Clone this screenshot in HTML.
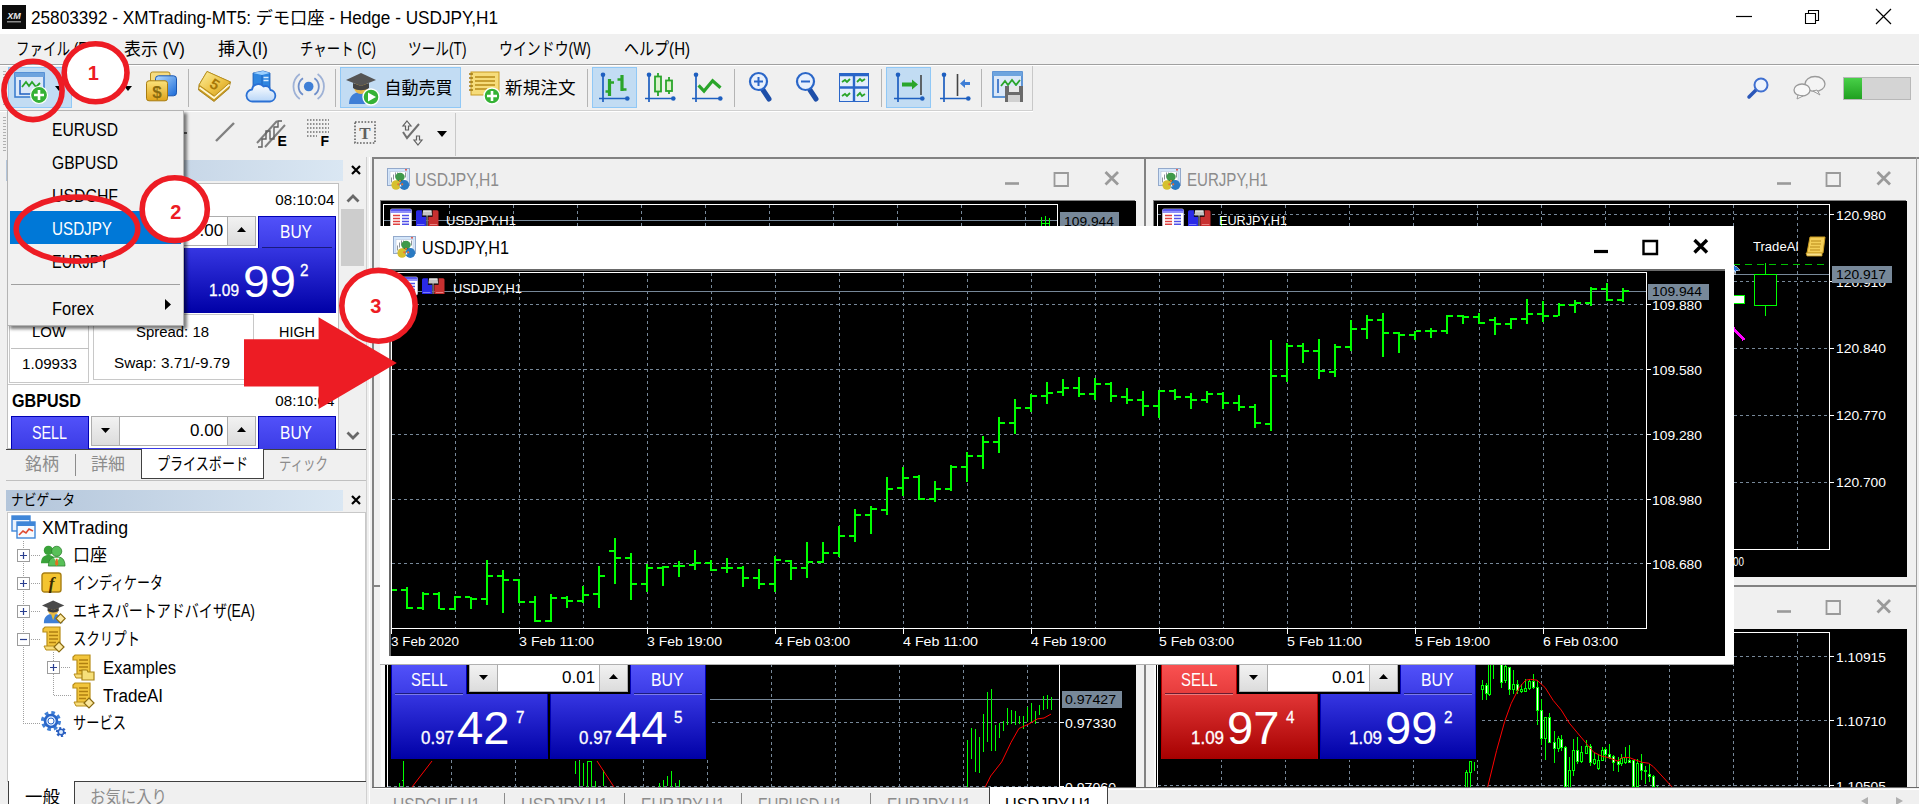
<!DOCTYPE html><html lang="ja"><head><meta charset="utf-8"><title>XMTrading MT5</title><style>
html,body{margin:0;padding:0;background:#f0f0f0;}body{width:1919px;height:804px;overflow:hidden;position:relative;font-family:"Liberation Sans","Noto Sans CJK JP",sans-serif;}.a{position:absolute;display:block;}.t{position:absolute;white-space:nowrap;display:inline-block;}svg{overflow:visible}svg text{font-family:'Liberation Sans','Noto Sans CJK JP',sans-serif;}
</style></head><body>
<div class="a" style="left:0px;top:0px;width:1919px;height:34px;background:#fff;"></div>
<svg class="a" style="left:2px;top:5px;" width="24" height="24" viewBox="0 0 24 24"><rect width="24" height="24" fill="#0c0c0c"/><text x="12" y="14" font-size="9" font-weight="700" font-style="italic" fill="#e8e8e8" text-anchor="middle">XM</text><rect x="5" y="16" width="14" height="1.5" fill="#8a8a8a"/></svg>
<span id="t0" class="t" style="left:31px;top:6.9px;font-size:17.5px;line-height:22.8px;color:#000;font-weight:400;transform-origin:0 50%;transform:scaleX(0.9819);">25803392 - XMTrading-MT5: デモ口座 - Hedge - USDJPY,H1</span>
<svg class="a" style="left:1735px;top:8px;" width="160" height="18" viewBox="0 0 160 18"><path d="M1 8.5H17" stroke="#000" stroke-width="1.2" fill="none"/><path d="M70.5 5.5h10v10h-10z M73.5 5.5v-3h10v10h-3" stroke="#000" stroke-width="1.1" fill="none"/><path d="M141 1l15 15M156 1l-15 15" stroke="#000" stroke-width="1.2" fill="none"/></svg>
<div class="a" style="left:0px;top:34px;width:1919px;height:30px;background:#f0f0f0;"></div>
<span id="t1" class="t" style="left:16px;top:37.6px;font-size:17.5px;line-height:22.8px;color:#000;font-weight:400;transform-origin:0 50%;transform:scaleX(0.7715);">ファイル (F)</span>
<span id="t2" class="t" style="left:123.5px;top:37.6px;font-size:17.5px;line-height:22.8px;color:#000;font-weight:400;transform-origin:0 50%;transform:scaleX(0.9651);">表示 (V)</span>
<span id="t3" class="t" style="left:218px;top:37.6px;font-size:17.5px;line-height:22.8px;color:#000;font-weight:400;transform-origin:0 50%;transform:scaleX(0.9703);">挿入(I)</span>
<span id="t4" class="t" style="left:300px;top:37.6px;font-size:17.5px;line-height:22.8px;color:#000;font-weight:400;transform-origin:0 50%;transform:scaleX(0.7678);">チャート (C)</span>
<span id="t5" class="t" style="left:408px;top:37.6px;font-size:17.5px;line-height:22.8px;color:#000;font-weight:400;transform-origin:0 50%;transform:scaleX(0.7815);">ツール(T)</span>
<span id="t6" class="t" style="left:499px;top:37.6px;font-size:17.5px;line-height:22.8px;color:#000;font-weight:400;transform-origin:0 50%;transform:scaleX(0.7952);">ウインドウ(W)</span>
<span id="t7" class="t" style="left:623.5px;top:37.6px;font-size:17.5px;line-height:22.8px;color:#000;font-weight:400;transform-origin:0 50%;transform:scaleX(0.8594);">ヘルプ(H)</span>
<div class="a" style="left:0px;top:64px;width:1919px;height:1px;background:#a0a0a0;"></div>
<div class="a" style="left:0px;top:65px;width:1919px;height:1px;background:#fff;"></div>
<div class="a" style="left:0px;top:66px;width:1919px;height:45px;background:#f0f0f0;"></div><div class="a" style="left:0px;top:110px;width:1033px;height:1px;background:#d0d0d0;"></div><div class="a" style="left:0px;top:111px;width:1033px;height:1px;background:#fff;"></div><div class="a" style="left:3px;top:69px;width:3px;height:38px;background:repeating-linear-gradient(#f0f0f0 0 2px,#b0b0b0 2px 3px);"></div><div class="a" style="left:8px;top:67px;width:64px;height:41px;background:#c2dcf3;box-sizing:border-box;border:1px solid #90c8f6;"></div><svg class="a" style="left:14px;top:72px;" width="34" height="32" viewBox="0 0 34 32"><rect x="1" y="1" width="29" height="24" fill="#dbe8f8" stroke="#3d7fcf" stroke-width="1.6"/><rect x="1" y="1" width="29" height="4" fill="#6ea4de"/><path d="M6 8v14h20" stroke="#1e5fc0" stroke-width="1.5" fill="none"/><path d="M8 15l4-5 3 4 3-4 4 5 4-4" stroke="#2aa52a" stroke-width="1.8" fill="none"/><circle cx="25" cy="23" r="8.5" fill="#35b235" stroke="#fff" stroke-width="1.2"/><path d="M25 18v10M20 23h10" stroke="#fff" stroke-width="2.6"/></svg><svg class="a" style="left:55px;top:86px;" width="8" height="5" viewBox="0 0 8 5"><path d="M0 0h8l-4 5z" fill="#000"/></svg><svg class="a" style="left:124px;top:86px;" width="8" height="5" viewBox="0 0 8 5"><path d="M0 0h8l-4 5z" fill="#000"/></svg><svg class="a" style="left:146px;top:71px;" width="32" height="32" viewBox="0 0 32 32"><defs><linearGradient id="gb" x1="0" y1="0" x2="1" y2="1"><stop offset="0" stop-color="#b4dcff"/><stop offset="1" stop-color="#1a6ad8"/></linearGradient><linearGradient id="gg" x1="0" y1="0" x2="0" y2="1"><stop offset="0" stop-color="#fbe27a"/><stop offset="1" stop-color="#e0a41c"/></linearGradient></defs><rect x="4.500" y="1" width="19.500" height="10" rx="2" fill="#f6dc80" stroke="#b08a1c"/><rect x="9.500" y="4.800" width="21" height="20" rx="3" fill="url(#gb)" stroke="#1a56b0"/><rect x=".5" y="9.800" width="21" height="20" rx="2.500" fill="url(#gg)" stroke="#a87c10"/><text x="11" y="26.500" font-size="17" font-weight="700" fill="#8a6c10" text-anchor="middle">$</text></svg><div class="a" style="left:188px;top:69px;width:1px;height:38px;background:#b4b4b4;"></div><svg class="a" style="left:197px;top:70px;" width="35" height="34" viewBox="0 0 35 34"><defs><linearGradient id="gk" x1="0" y1="0" x2="1" y2="1"><stop offset="0" stop-color="#fdf0a0"/><stop offset=".6" stop-color="#ecc040"/><stop offset="1" stop-color="#c8961c"/></linearGradient></defs><path d="M10 1.500L33.500 12l-1.500 6.500L17 31.500 1.500 20 2 15z" fill="#c89a20" stroke="#a07810" stroke-width=".8"/><path d="M2.500 17.500L17 28l15.500-13.500" stroke="#fff6d0" stroke-width="2" fill="none"/><path d="M10 1.500L33.500 12 17.500 26 2 15z" fill="url(#gk)" stroke="#b48a18" stroke-width=".8"/><text x="18" y="19.500" font-size="15" font-weight="700" fill="#a87808" text-anchor="middle" transform="rotate(32 18 14)">5</text></svg><svg class="a" style="left:246px;top:70px;" width="33" height="34" viewBox="0 0 33 34"><defs><linearGradient id="gc" x1="0" y1="0" x2="0" y2="1"><stop offset="0" stop-color="#ffffff"/><stop offset="1" stop-color="#b8d6f8"/></linearGradient></defs><path d="M7 3l10-2 7 2v15H7z" fill="#2f86e0" stroke="#1a5cb8" stroke-width=".8"/><path d="M7 3l10-2 7 2-8 2z" fill="#9cd0ff"/><path d="M16 5v13" stroke="#1a5cb8" stroke-width=".8"/><path d="M17.500 7.500h5M17.500 10.500h5" stroke="#d8ecff" stroke-width="1.400"/><path d="M7 31.500a6 6 0 0 1-1-12 6.500 6.500 0 0 1 11.500-3 5 5 0 0 1 7 3.500 5.800 5.800 0 0 1-.5 11.500z" fill="url(#gc)" stroke="#2a70d4" stroke-width="1.800"/></svg><svg class="a" style="left:291px;top:71px;" width="34" height="34" viewBox="0 0 34 34"><circle cx="17.700" cy="15.500" r="4.800" fill="#3f7fd6"/><path d="M12 7.200a10 10 0 0 0 0 16.600M23.400 7.200a10 10 0 0 1 0 16.600" stroke="#6f8fca" stroke-width="1.800" fill="none"/><path d="M8.800 3a15.500 15.500 0 0 0 0 25M26.600 3a15.500 15.500 0 0 1 0 25" stroke="#9fb2d6" stroke-width="1.800" fill="none"/></svg><div class="a" style="left:335px;top:69px;width:1px;height:38px;background:#b4b4b4;"></div><div class="a" style="left:340px;top:67px;width:121px;height:41px;background:#c2dcf3;box-sizing:border-box;border:1px solid #90c8f6;"></div><svg class="a" style="left:345px;top:70px;" width="36" height="36" viewBox="0 0 36 36"><path d="M4 34c0-8 5-12 12-12s12 4 12 12z" fill="#3f7fd6"/><circle cx="16" cy="17" r="7" fill="#e8b84a"/><path d="M1 10l15-7 15 7-15 6z" fill="#555"/><path d="M8 13v5c4 3 12 3 16 0v-5l-8 3z" fill="#444"/><circle cx="26" cy="27" r="8" fill="#35b235" stroke="#fff" stroke-width="1.4"/><path d="M23 22.500l8 4.500-8 4.500z" fill="#fff"/></svg><span id="t8" class="t" style="left:384.5px;top:77.95px;font-size:17px;line-height:22.1px;color:#000;font-weight:400;transform-origin:0 50%;">自動売買</span><svg class="a" style="left:468px;top:70px;" width="36" height="36" viewBox="0 0 36 36"><rect x="3" y="2" width="28" height="23" fill="#f6dc7a" stroke="#c89a20"/><path d="M7 7h20M7 11h20M7 15h20M7 19h12" stroke="#b88a18" stroke-width="1.6"/><path d="M1 4h4M1 8h4M1 12h4M1 16h4M1 20h4" stroke="#a07810" stroke-width="1.4"/><circle cx="24" cy="26" r="8" fill="#35b235" stroke="#fff" stroke-width="1.4"/><path d="M24 21v10M19 26h10" stroke="#fff" stroke-width="2.6"/></svg><span id="t9" class="t" style="left:504.5px;top:77.95px;font-size:17px;line-height:22.1px;color:#000;font-weight:400;transform-origin:0 50%;transform:scaleX(1.0368);">新規注文</span><div class="a" style="left:587px;top:69px;width:1px;height:38px;background:#b4b4b4;"></div><div class="a" style="left:592px;top:67px;width:45px;height:41px;background:#c2dcf3;box-sizing:border-box;border:1px solid #90c8f6;"></div><svg class="a" style="left:598px;top:72px;" width="32" height="30" viewBox="0 0 32 30"><path d="M5 2V30M1 26.500H30" stroke="#1e5fc0" stroke-width="1.700" fill="none"/><circle cx="5" cy="2.800" r="2.300" fill="#1e5fc0"/><circle cx="29.300" cy="26.500" r="2.300" fill="#1e5fc0"/><path d="M11.500 7v17M24 3v16" stroke="#2aa52a" stroke-width="3.200" fill="none"/><path d="M7.500 19.500h4M11.500 10.500h4.500M19.500 7.500h4.500M24 17.500h4.500" stroke="#2aa52a" stroke-width="2.600" fill="none"/></svg><svg class="a" style="left:644px;top:72px;" width="32" height="30" viewBox="0 0 32 30"><path d="M5 2V30M1 26.500H30" stroke="#1e5fc0" stroke-width="1.700" fill="none"/><circle cx="5" cy="2.800" r="2.300" fill="#1e5fc0"/><circle cx="29.300" cy="26.500" r="2.300" fill="#1e5fc0"/><path d="M14 1v23M25 5v17" stroke="#2aa52a" stroke-width="1.800" fill="none"/><rect x="11" y="4.500" width="6" height="15" fill="#dcf2cc" stroke="#2aa52a" stroke-width="1.800"/><rect x="22" y="8.500" width="6" height="10.500" fill="#dcf2cc" stroke="#2aa52a" stroke-width="1.800"/></svg><svg class="a" style="left:691px;top:72px;" width="32" height="30" viewBox="0 0 32 30"><path d="M5 2V30M1 26.500H30" stroke="#1e5fc0" stroke-width="1.700" fill="none"/><circle cx="5" cy="2.800" r="2.300" fill="#1e5fc0"/><circle cx="29.300" cy="26.500" r="2.300" fill="#1e5fc0"/><path d="M7.600 13.400L13 19L21.600 8.800L29.500 15.800" stroke="#2aa52a" stroke-width="3.200" fill="none"/></svg><div class="a" style="left:734px;top:69px;width:1px;height:38px;background:#b4b4b4;"></div><svg class="a" style="left:747px;top:72px;" width="28" height="32" viewBox="0 0 28 32"><path d="M16 18l6 9" stroke="#1e4fa8" stroke-width="5" stroke-linecap="round"/><circle cx="11.500" cy="9.500" r="8.500" fill="#e8f0fc" stroke="#2a66c8" stroke-width="2.200"/><path d="M7 9.500h9M11.500 5v9" stroke="#2a66c8" stroke-width="2"/></svg><svg class="a" style="left:794px;top:72px;" width="28" height="32" viewBox="0 0 28 32"><path d="M16 18l6 9" stroke="#1e4fa8" stroke-width="5" stroke-linecap="round"/><circle cx="11.500" cy="9.500" r="8.500" fill="#e8f0fc" stroke="#2a66c8" stroke-width="2.200"/><path d="M7 9.500h9" stroke="#2a66c8" stroke-width="2"/></svg><svg class="a" style="left:839px;top:73px;" width="31" height="29" viewBox="0 0 31 29"><rect x=".5" y=".5" width="29" height="28" fill="#e4eefb" stroke="#2a66c8"/><path d="M0 2h30M15 0v29M0 14.500h30" stroke="#2a66c8" stroke-width="2.400"/><path d="M3 9l3-2 2 2 3-3M18 9l3-3 2 2 3-2M3 23l3-2 2 2 3-3M18 23l3-3 2 3 3-2" stroke="#2aa52a" stroke-width="1.800" fill="none"/></svg><div class="a" style="left:881px;top:69px;width:1px;height:38px;background:#b4b4b4;"></div><div class="a" style="left:886px;top:67px;width:45px;height:41px;background:#c2dcf3;box-sizing:border-box;border:1px solid #90c8f6;"></div><svg class="a" style="left:893px;top:72px;" width="32" height="30" viewBox="0 0 32 30"><path d="M5 2V30M1 26.500H30" stroke="#1e5fc0" stroke-width="1.700" fill="none"/><circle cx="5" cy="2.800" r="2.300" fill="#1e5fc0"/><circle cx="29.300" cy="26.500" r="2.300" fill="#1e5fc0"/><path d="M28 3v20" stroke="#444" stroke-width="1.600"/><path d="M9 10.500h10v-3l6 5-6 5v-3h-10z" fill="#2aa52a"/></svg><svg class="a" style="left:939px;top:72px;" width="32" height="30" viewBox="0 0 32 30"><path d="M5 2V30M1 26.500H30" stroke="#1e5fc0" stroke-width="1.700" fill="none"/><circle cx="5" cy="2.800" r="2.300" fill="#1e5fc0"/><circle cx="29.300" cy="26.500" r="2.300" fill="#1e5fc0"/><path d="M18.500 2v22" stroke="#444" stroke-width="1.600"/><path d="M31 10h-5v-3l-5 4.500 5 4.500v-3h5z" fill="#3f7fd6"/></svg><div class="a" style="left:981px;top:69px;width:1px;height:38px;background:#b4b4b4;"></div><svg class="a" style="left:992px;top:71px;" width="34" height="33" viewBox="0 0 34 33"><rect x="1" y="1" width="29" height="25" fill="#dbe8f8" stroke="#3d7fcf" stroke-width="1.600"/><rect x="1" y="1" width="29" height="4" fill="#6ea4de"/><path d="M6 8v14" stroke="#1e5fc0" stroke-width="1.500" fill="none"/><path d="M9 15l4-5 3 4 4-5 4 5 4-5" stroke="#2aa52a" stroke-width="1.800" fill="none"/><path d="M13 15h18v16H13z" fill="#6a6a6a"/><rect x="17" y="15" width="10" height="6" fill="#e8e8e8"/><rect x="16" y="24" width="12" height="7" fill="#d0d0d0"/></svg><div class="a" style="left:1032px;top:66px;width:1px;height:44px;background:#c8c8c8;"></div><svg class="a" style="left:1746px;top:76px;" width="24" height="24" viewBox="0 0 24 24"><path d="M3 21l8-8" stroke="#2a56b8" stroke-width="3.500" stroke-linecap="round"/><circle cx="15" cy="9" r="6.500" fill="#eef4fd" stroke="#3f6fd0" stroke-width="2"/></svg><svg class="a" style="left:1792px;top:75px;" width="36" height="26" viewBox="0 0 36 26"><ellipse cx="23" cy="9" rx="10" ry="7.500" fill="#f4f4f4" stroke="#9a9a9a" stroke-width="1.300"/><path d="M25 15l3 5-7-4z" fill="#f4f4f4" stroke="#9a9a9a" stroke-width="1"/><ellipse cx="10" cy="15" rx="8" ry="6" fill="#f8f8f8" stroke="#9a9a9a" stroke-width="1.300"/><path d="M6 20l-1 4 6-3z" fill="#f8f8f8" stroke="#9a9a9a" stroke-width="1"/></svg><div class="a" style="left:1843px;top:77px;width:68px;height:23px;background:#d4d4d4;box-sizing:border-box;border:1px solid #b8b8b8;"></div><div class="a" style="left:1844px;top:78px;width:18px;height:21px;background:linear-gradient(#48d048,#20a020);"></div>
<div class="a" style="left:0px;top:112px;width:1919px;height:45px;background:#f0f0f0;"></div><div class="a" style="left:3px;top:115px;width:3px;height:38px;background:repeating-linear-gradient(#f0f0f0 0 2px,#b0b0b0 2px 3px);"></div><div class="a" style="left:183px;top:132px;width:4px;height:2px;background:#606060;"></div><svg class="a" style="left:214px;top:121px;" width="22" height="22" viewBox="0 0 22 22"><path d="M2 20L20 2" stroke="#808080" stroke-width="2.400"/></svg><svg class="a" style="left:255px;top:117px;" width="34" height="32" viewBox="0 0 34 32"><path d="M2 26L22 4M10 30L30 8" stroke="#808080" stroke-width="2"/><path d="M3 30h4v-8h4v-8h4v8h4v-12h4v-6h4" stroke="#606060" stroke-width="1.400" fill="none"/><text x="22.500" y="29" font-size="14" font-weight="700" fill="#000">E</text></svg><svg class="a" style="left:306px;top:118px;" width="28" height="30" viewBox="0 0 28 30"><path d="M1 2h22M1 6h22M1 10h22M1 14h22M1 18h10" stroke="#707070" stroke-width="1.400" stroke-dasharray="1.5 1.5"/><text x="14.500" y="28" font-size="14" font-weight="700" fill="#000">F</text></svg><svg class="a" style="left:354px;top:121px;" width="24" height="24" viewBox="0 0 24 24"><rect x="1" y="1" width="20" height="21" fill="none" stroke="#606060" stroke-width="1.600" stroke-dasharray="1.6 1.6"/><text x="11" y="18" font-size="17" font-weight="700" fill="#606060" text-anchor="middle" style="font-family:'Liberation Serif',serif">T</text></svg><svg class="a" style="left:401px;top:120px;" width="24" height="26" viewBox="0 0 24 26"><path d="M6 1l4 5h-2.500v4h-3v-4H2z" fill="none" stroke="#606060" stroke-width="1.200"/><path d="M2 12l4 6L18 4" stroke="#707070" stroke-width="2" fill="none"/><path d="M17 25l4-5h-2.500v-4h-3v4H13z" fill="none" stroke="#606060" stroke-width="1.200"/></svg><svg class="a" style="left:437px;top:131px;" width="10" height="6" viewBox="0 0 10 6"><path d="M0 0h10l-5 6z" fill="#000"/></svg><div class="a" style="left:455px;top:113px;width:1px;height:43px;background:#c8c8c8;"></div>
<div class="a" style="left:0px;top:157px;width:372px;height:647px;background:#f0f0f0;"></div><div class="a" style="left:6px;top:160px;width:337px;height:21px;background:linear-gradient(90deg,#b3c5da,#dae7f3);"></div><svg class="a" style="left:351px;top:165px;" width="10" height="10" viewBox="0 0 10 10"><path d="M1 1l8 8M9 1l-8 8" stroke="#000" stroke-width="2.2" fill="none"/></svg><div class="a" style="left:7px;top:183px;width:332px;height:266px;background:#fff;border:1px solid #c0c0c0;box-sizing:border-box;"></div><div class="a" style="left:340px;top:184px;width:25px;height:265px;background:#f0f0f0;"></div><div class="a" style="left:340.5px;top:209px;width:23px;height:56.5px;background:#cdcdcd;"></div><svg class="a" style="left:345.5px;top:192.5px;" width="14" height="10" viewBox="0 0 14 10"><path d="M1.5 8.500l5.500-5.500 5.500 5.500" stroke="#686868" stroke-width="2.800" fill="none"/></svg><svg class="a" style="left:345.5px;top:430.5px;" width="14" height="10" viewBox="0 0 14 10"><path d="M1.500 1.500l5.500 5.500 5.500-5.500" stroke="#686868" stroke-width="2.800" fill="none"/></svg><span id="t10" class="t" style="right:1585px;top:189.9px;font-size:15.5px;line-height:20.2px;color:#000;font-weight:400;transform-origin:100% 50%;transform:scaleX(0.9777);">08:10:04</span><div class="a" style="left:258px;top:216px;width:78px;height:32px;background:linear-gradient(#5252fa,#3c3ce6);box-shadow:inset 1px 0 0 #0000b4,inset -1px 0 0 #0000b4,inset 0 1px 0 #0000b4;"></div><div class="a" style="left:262px;top:247px;width:70px;height:1px;background:rgba(0,0,40,.55);"></div><div class="a" style="left:262px;top:248px;width:70px;height:1px;background:rgba(255,255,255,.35);"></div><span id="t11" class="t" style="left:280px;top:221.4px;font-size:17.5px;line-height:22.8px;color:#fff;font-weight:400;transform-origin:0 50%;transform:scaleX(0.8893);">BUY</span><div class="a" style="left:91px;top:216px;width:165px;height:30px;background:#fff;box-sizing:border-box;border:1px solid #adadad;"></div><div class="a" style="left:91px;top:216px;width:29px;height:30px;background:linear-gradient(#f2f2f2,#dcdcdc);box-sizing:border-box;border:1px solid #adadad;"></div><div class="a" style="left:227px;top:216px;width:29px;height:30px;background:linear-gradient(#f2f2f2,#dcdcdc);box-sizing:border-box;border:1px solid #adadad;"></div><svg class="a" style="left:101px;top:228px;" width="9" height="5" viewBox="0 0 9 5"><path d="M0 0h9l-4.5 5z" fill="#000"/></svg><svg class="a" style="left:237px;top:227px;" width="9" height="5" viewBox="0 0 9 5"><path d="M0 5h9l-4.5 -5z" fill="#000"/></svg><span id="t12" class="t" style="right:1696px;top:219.95px;font-size:17px;line-height:22.1px;color:#000;font-weight:400;transform-origin:100% 50%;transform:scaleX(0.9972);">0.00</span><div class="a" style="left:10px;top:248px;width:172px;height:65px;background:linear-gradient(#3636e2,#0000a6);box-shadow:inset 1px 0 0 #0000b4,inset -1px 0 0 #0000b4;"></div><div class="a" style="left:184px;top:248px;width:152px;height:65px;background:linear-gradient(#3636e2,#0000a6);box-shadow:inset 1px 0 0 #0000b4,inset -1px 0 0 #0000b4;"></div><div class="a" style="left:10px;top:216px;width:79px;height:32px;background:linear-gradient(#5252fa,#3c3ce6);box-shadow:inset 1px 0 0 #0000b4,inset -1px 0 0 #0000b4,inset 0 1px 0 #0000b4;"></div><span id="t13" class="t" style="left:209px;top:280.8px;font-size:16px;line-height:20.8px;color:#fff;font-weight:400;transform-origin:0 50%;transform:scaleX(0.9634);-webkit-text-stroke:.3px #fff;">1.09</span><span id="t14" class="t" style="left:243px;top:253.05px;font-size:45px;line-height:58.5px;color:#fff;font-weight:400;transform-origin:0 50%;transform:scaleX(1.0587);">99</span><span id="t15" class="t" style="left:300px;top:261.3px;font-size:16px;line-height:20.8px;color:#fff;font-weight:400;transform-origin:0 50%;transform:scaleX(0.9544);-webkit-text-stroke:.3px #fff;">2</span><div class="a" style="left:9px;top:314px;width:80px;height:69px;background:#fff;border:1px solid #c8c8c8;box-sizing:border-box;"></div><div class="a" style="left:93px;top:314px;width:161px;height:66px;background:#fff;border:1px solid #c8c8c8;box-sizing:border-box;"></div><div class="a" style="left:11px;top:348px;width:78px;height:1px;background:#c0c0c0;"></div><span id="t16" class="t" style="left:32px;top:321.9px;font-size:15.5px;line-height:20.2px;color:#000;font-weight:400;transform-origin:0 50%;transform:scaleX(0.9628);">LOW</span><span id="t17" class="t" style="left:22px;top:354.4px;font-size:15.5px;line-height:20.2px;color:#000;font-weight:400;transform-origin:0 50%;transform:scaleX(0.9816);">1.09933</span><span id="t18" class="t" style="left:136px;top:321.9px;font-size:15.5px;line-height:20.2px;color:#000;font-weight:400;transform-origin:0 50%;transform:scaleX(0.9625);">Spread: 18</span><span id="t19" class="t" style="left:114px;top:353.4px;font-size:15.5px;line-height:20.2px;color:#000;font-weight:400;transform-origin:0 50%;transform:scaleX(0.9897);">Swap: 3.71/-9.79</span><span id="t20" class="t" style="left:279px;top:321.9px;font-size:15.5px;line-height:20.2px;color:#000;font-weight:400;transform-origin:0 50%;transform:scaleX(0.9290);">HIGH</span><div class="a" style="left:8px;top:384px;width:332px;height:1px;background:#c8c8c8;"></div><span id="t21" class="t" style="left:12px;top:389.9px;font-size:17.5px;line-height:22.8px;color:#000;font-weight:700;transform-origin:0 50%;transform:scaleX(0.9215);">GBPUSD</span><span id="t22" class="t" style="right:1585px;top:390.9px;font-size:15.5px;line-height:20.2px;color:#000;font-weight:400;transform-origin:100% 50%;transform:scaleX(0.9777);">08:10:04</span><div class="a" style="left:11px;top:416px;width:78px;height:33px;background:linear-gradient(#5252fa,#3c3ce6);box-shadow:inset 1px 0 0 #0000b4,inset -1px 0 0 #0000b4,inset 0 1px 0 #0000b4;"></div><div class="a" style="left:258px;top:416px;width:78px;height:33px;background:linear-gradient(#5252fa,#3c3ce6);box-shadow:inset 1px 0 0 #0000b4,inset -1px 0 0 #0000b4,inset 0 1px 0 #0000b4;"></div><span id="t23" class="t" style="left:32px;top:421.9px;font-size:17.5px;line-height:22.8px;color:#fff;font-weight:400;transform-origin:0 50%;transform:scaleX(0.8175);">SELL</span><span id="t24" class="t" style="left:280px;top:421.9px;font-size:17.5px;line-height:22.8px;color:#fff;font-weight:400;transform-origin:0 50%;transform:scaleX(0.8893);">BUY</span><div class="a" style="left:91px;top:416px;width:165px;height:30px;background:#fff;box-sizing:border-box;border:1px solid #adadad;"></div><div class="a" style="left:91px;top:416px;width:29px;height:30px;background:linear-gradient(#f2f2f2,#dcdcdc);box-sizing:border-box;border:1px solid #adadad;"></div><div class="a" style="left:227px;top:416px;width:29px;height:30px;background:linear-gradient(#f2f2f2,#dcdcdc);box-sizing:border-box;border:1px solid #adadad;"></div><svg class="a" style="left:101px;top:428px;" width="9" height="5" viewBox="0 0 9 5"><path d="M0 0h9l-4.5 5z" fill="#000"/></svg><svg class="a" style="left:237px;top:427px;" width="9" height="5" viewBox="0 0 9 5"><path d="M0 5h9l-4.5 -5z" fill="#000"/></svg><span id="t25" class="t" style="right:1696px;top:419.95px;font-size:17px;line-height:22.1px;color:#000;font-weight:400;transform-origin:100% 50%;transform:scaleX(0.9972);">0.00</span><div class="a" style="left:89px;top:447.5px;width:169px;height:1.5px;background:#3a3ae6;"></div><div class="a" style="left:6px;top:449px;width:360px;height:32px;background:#f0f0f0;"></div><div class="a" style="left:6px;top:449px;width:360px;height:1px;background:#404040;"></div><div class="a" style="left:141px;top:449px;width:123px;height:30px;background:#fff;border:1px solid #404040;border-top:none;box-sizing:border-box;"></div><span id="t26" class="t" style="left:25px;top:454.25px;font-size:17px;line-height:22.1px;color:#8c8c8c;font-weight:400;transform-origin:0 50%;">銘柄</span><div class="a" style="left:75px;top:454px;width:1px;height:22px;background:#8c8c8c;"></div><span id="t27" class="t" style="left:91px;top:454.25px;font-size:17px;line-height:22.1px;color:#8c8c8c;font-weight:400;transform-origin:0 50%;">詳細</span><span id="t28" class="t" style="left:157px;top:454.25px;font-size:17px;line-height:22.1px;color:#000;font-weight:400;transform-origin:0 50%;transform:scaleX(0.7679);">プライスボード</span><span id="t29" class="t" style="left:279px;top:454.25px;font-size:17px;line-height:22.1px;color:#8c8c8c;font-weight:400;transform-origin:0 50%;transform:scaleX(0.7315);">ティック</span><div class="a" style="left:6px;top:480px;width:360px;height:1px;background:#c0c0c0;"></div><div class="a" style="left:6px;top:490px;width:337px;height:21px;background:linear-gradient(90deg,#b3c5da,#dae7f3);"></div><span id="t30" class="t" style="left:11px;top:490.25px;font-size:15px;line-height:19.5px;color:#000;font-weight:400;transform-origin:0 50%;transform:scaleX(0.8532);">ナビゲータ</span><svg class="a" style="left:351px;top:495px;" width="10" height="10" viewBox="0 0 10 10"><path d="M1 1l8 8M9 1l-8 8" stroke="#000" stroke-width="2.2" fill="none"/></svg><div class="a" style="left:7px;top:512px;width:359px;height:270px;background:#fff;border:1px solid #c8c8c8;border-bottom:none;box-sizing:border-box;"></div><svg class="a" style="left:0px;top:0px;shape-rendering:crispEdges;" width="372" height="804" viewBox="0 0 372 804"><path d="M23.500 541V723.500H41M29 555.500h12M29 583.500h12M29 611.500h12M29 639.500h12" stroke="#a0a0a0" stroke-width="1" stroke-dasharray="1 1" fill="none"/><path d="M53.500 652V695.500H71M59 667.500h12" stroke="#a0a0a0" stroke-width="1" stroke-dasharray="1 1" fill="none"/></svg><svg class="a" style="left:11px;top:515px;" width="26" height="25" viewBox="0 0 26 25"><rect x="1" y="1" width="18" height="15" fill="#eaf2fc" stroke="#3f86d8" stroke-width="1.400"/><rect x="1" y="1" width="18" height="4" fill="#3f86d8"/><rect x="6" y="7" width="18" height="16" fill="#f6faff" stroke="#3f86d8" stroke-width="1.400"/><rect x="6" y="7" width="18" height="4" fill="#3f86d8"/><path d="M8 20l4-4 3 2 3-4 4 2" stroke="#e04a30" stroke-width="1.600" fill="none"/></svg><span id="t31" class="t" style="left:42px;top:517px;font-size:18px;line-height:23.4px;color:#000;font-weight:400;transform-origin:0 50%;transform:scaleX(0.9843);">XMTrading</span><svg class="a" style="left:17px;top:549px;" width="13" height="13" viewBox="0 0 13 13"><rect x=".5" y=".5" width="12" height="12" fill="#fff" stroke="#9c9c9c"/><path d="M3 6.500h7M6.500 3v7" stroke="#2a3f8f" stroke-width="1.200"/></svg><span id="t32" class="t" style="left:72.5px;top:544.1px;font-size:17.5px;line-height:22.8px;color:#000;font-weight:400;transform-origin:0 50%;transform:scaleX(0.9714);">口座</span><svg class="a" style="left:17px;top:577px;" width="13" height="13" viewBox="0 0 13 13"><rect x=".5" y=".5" width="12" height="12" fill="#fff" stroke="#9c9c9c"/><path d="M3 6.500h7M6.500 3v7" stroke="#2a3f8f" stroke-width="1.200"/></svg><span id="t33" class="t" style="left:72.5px;top:572.1px;font-size:17.5px;line-height:22.8px;color:#000;font-weight:400;transform-origin:0 50%;transform:scaleX(0.7421);">インディケータ</span><svg class="a" style="left:17px;top:605px;" width="13" height="13" viewBox="0 0 13 13"><rect x=".5" y=".5" width="12" height="12" fill="#fff" stroke="#9c9c9c"/><path d="M3 6.500h7M6.500 3v7" stroke="#2a3f8f" stroke-width="1.200"/></svg><span id="t34" class="t" style="left:72.5px;top:600.1px;font-size:17.5px;line-height:22.8px;color:#000;font-weight:400;transform-origin:0 50%;transform:scaleX(0.8018);">エキスパートアドバイザ(EA)</span><svg class="a" style="left:17px;top:633px;" width="13" height="13" viewBox="0 0 13 13"><rect x=".5" y=".5" width="12" height="12" fill="#fff" stroke="#9c9c9c"/><path d="M3 6.500h7" stroke="#2a3f8f" stroke-width="1.200"/></svg><span id="t35" class="t" style="left:72.5px;top:628.1px;font-size:17.5px;line-height:22.8px;color:#000;font-weight:400;transform-origin:0 50%;transform:scaleX(0.7657);">スクリプト</span><svg class="a" style="left:47px;top:661px;" width="13" height="13" viewBox="0 0 13 13"><rect x=".5" y=".5" width="12" height="12" fill="#fff" stroke="#9c9c9c"/><path d="M3 6.500h7M6.500 3v7" stroke="#2a3f8f" stroke-width="1.200"/></svg><span id="t36" class="t" style="left:102.5px;top:656.8px;font-size:18px;line-height:23.4px;color:#000;font-weight:400;transform-origin:0 50%;transform:scaleX(0.9237);">Examples</span><span id="t37" class="t" style="left:102.5px;top:684.8px;font-size:18px;line-height:23.4px;color:#000;font-weight:400;transform-origin:0 50%;transform:scaleX(0.9467);">TradeAI</span><span id="t38" class="t" style="left:72.5px;top:712.1px;font-size:17.5px;line-height:22.8px;color:#000;font-weight:400;transform-origin:0 50%;transform:scaleX(0.7571);">サービス</span><svg class="a" style="left:41px;top:543px;" width="24" height="24" viewBox="0 0 26 26"><circle cx="8" cy="8" r="5" fill="#3aa23a"/><path d="M0 22c0-7 4-9 8-9s8 2 8 9z" fill="#3aa23a"/><circle cx="17" cy="9" r="5.500" fill="#58c058" stroke="#2a7a2a" stroke-width=".8"/><path d="M8 25c0-8 4-10 9-10s9 2 9 10z" fill="#58c058" stroke="#2a7a2a" stroke-width=".8"/><path d="M14 16l3 5 3-5z" fill="#fff"/><path d="M16 17h2l.8 6-1.800 2-1.800-2z" fill="#e07020"/></svg><svg class="a" style="left:41px;top:572px;" width="22" height="22" viewBox="0 0 22 22"><rect x="1" y="1" width="19" height="19" rx="2.500" fill="#f4c430" stroke="#a87f14" stroke-width="1.400"/><text x="10.500" y="16.500" font-size="17" font-style="italic" font-weight="700" fill="#3a2a00" text-anchor="middle" style="font-family:'Liberation Serif',serif">f</text></svg><svg class="a" style="left:41.5px;top:599px;" width="26" height="26" viewBox="0 0 28 28"><path d="M2 26c0-7 4-10 10-10s10 3 10 10z" fill="#3f7fd6"/><circle cx="12" cy="12" r="5.500" fill="#e8b84a"/><path d="M0 7l12-5.500 12 5.500-12 5z" fill="#4a4a4a"/><path d="M6 9.500v3.500c3 2 9 2 12 0V9.500l-6 2.500z" fill="#3a3a3a"/><path d="M10 17l2 6 2-6z" fill="#e8c030"/><path d="M20 16l5 5-5 5-5-5z" fill="#fbe8a0" stroke="#8a6a10" stroke-width="1.200"/></svg><svg class="a" style="left:41px;top:626px;" width="25" height="27" viewBox="0 0 25 27"><path d="M4 1h15v20H6V6H2V3z" fill="#f2c53c" stroke="#b88d18" stroke-width="1.200"/><path d="M8 6h9M8 9.500h9M8 13h9M8 16.500h7" stroke="#b07f10" stroke-width="1.400"/><path d="M3 20h14v4H5z" fill="#f8dd7a" stroke="#b88d18" stroke-width="1"/><path d="M18 16l5 5-5 5-5-5z" fill="#fbe8a0" stroke="#8a6a10" stroke-width="1.200"/></svg><svg class="a" style="left:71px;top:654px;" width="25" height="27" viewBox="0 0 25 27"><path d="M4 1h15v20H6V6H2V3z" fill="#f2c53c" stroke="#b88d18" stroke-width="1.200"/><path d="M8 6h9M8 9.500h9M8 13h9M8 16.500h7" stroke="#b07f10" stroke-width="1.400"/><path d="M3 20h14v4H5z" fill="#f8dd7a" stroke="#b88d18" stroke-width="1"/><path d="M11 16h5l1 2h6v8H11z" fill="#f6e07a" stroke="#a88418" stroke-width="1.200"/></svg><svg class="a" style="left:71px;top:682px;" width="25" height="27" viewBox="0 0 25 27"><path d="M4 1h15v20H6V6H2V3z" fill="#f2c53c" stroke="#b88d18" stroke-width="1.200"/><path d="M8 6h9M8 9.500h9M8 13h9M8 16.500h7" stroke="#b07f10" stroke-width="1.400"/><path d="M3 20h14v4H5z" fill="#f8dd7a" stroke="#b88d18" stroke-width="1"/><path d="M18 16l5 5-5 5-5-5z" fill="#fbe8a0" stroke="#8a6a10" stroke-width="1.200"/></svg><svg class="a" style="left:40px;top:710px;" width="28" height="28" viewBox="0 0 28 28"><circle cx="11" cy="11" r="7.500" fill="none" stroke="#3f7fd6" stroke-width="5" stroke-dasharray="3.200 2.700"/><circle cx="11" cy="11" r="6" fill="#dcecff" stroke="#2a66c8" stroke-width="2.600"/><circle cx="11" cy="11" r="3" fill="#fff" stroke="#2a66c8" stroke-width="1"/><circle cx="21" cy="22" r="3.600" fill="none" stroke="#2a5fc0" stroke-width="3" stroke-dasharray="1.900 1.800"/><circle cx="21" cy="22" r="2.800" fill="#dcecff" stroke="#2a5fc0" stroke-width="1.600"/></svg><div class="a" style="left:8px;top:781px;width:358px;height:1px;background:#404040;"></div><div class="a" style="left:8px;top:781px;width:67px;height:23px;background:#fff;border-left:1px solid #404040;border-right:1px solid #404040;box-sizing:border-box;"></div><div class="a" style="left:75px;top:782px;width:290px;height:22px;background:#f0f0f0;"></div><span id="t39" class="t" style="left:25px;top:787.25px;font-size:17px;line-height:22.1px;color:#000;font-weight:400;transform-origin:0 50%;transform:scaleX(1.0294);">一般</span><span id="t40" class="t" style="left:90px;top:787.25px;font-size:17px;line-height:22.1px;color:#8c8c8c;font-weight:400;transform-origin:0 50%;transform:scaleX(0.9059);">お気に入り</span><div class="a" style="left:366px;top:157px;width:1px;height:647px;background:#d0d0d0;"></div><div class="a" style="left:369px;top:157px;width:1px;height:647px;background:#fff;"></div>
<div class="a" style="left:372px;top:157px;width:1547px;height:631px;background:#f0f0f0;"></div><div class="a" style="left:372px;top:157px;width:1547px;height:2px;background:#828282;"></div><div class="a" style="left:372px;top:157px;width:2px;height:631px;background:#828282;"></div><div class="a" style="left:1916px;top:157px;width:1px;height:631px;background:#a0a0a0;"></div><div class="a" style="left:1144px;top:159px;width:2px;height:628px;background:#828282;"></div><div class="a" style="left:374px;top:585px;width:1542px;height:2px;background:#828282;"></div><svg class="a" style="left:386.5px;top:167.5px;" width="24" height="23" viewBox="0 0 24 23"><rect x=".5" y=".5" width="22" height="17" fill="#d4e6fa" stroke="#93a9cb"/><rect x="3" y="3.500" width="17" height="13" fill="#fff" stroke="#b4c4dc" stroke-width=".6"/><rect x="18" y="1.200" width="2" height="1.300" fill="#e04030"/><path d="M4.500 9.500v5M6.500 6.500v5M8.500 4.500v5M10.500 4.500v1.500M18.500 4.500v5" stroke="#808890" stroke-width=".9"/><ellipse cx="13" cy="9" rx="4.700" ry="4.200" fill="#3f9a4a"/><path d="M8.500 14c1-3 8-3 9 0z" fill="#2f8038"/><ellipse cx="9" cy="17" rx="4.600" ry="4.800" fill="#d6c02e"/><ellipse cx="17.300" cy="17" rx="4.900" ry="4.900" fill="#2a7ac2"/><circle cx="13" cy="12.800" r="1.100" fill="#f07030"/><circle cx="11.300" cy="16.300" r="1.100" fill="#f07030"/><circle cx="15.200" cy="16.300" r="1.100" fill="#f07030"/><path d="M12.500 18.500l1-2.500 1 2.500z" fill="#fff"/></svg><span id="t41" class="t" style="left:415px;top:168.5px;font-size:18px;line-height:23.4px;color:#8c8c8c;font-weight:400;transform-origin:0 50%;transform:scaleX(0.8685);">USDJPY,H1</span><svg class="a" style="left:1002px;top:168px;" width="110" height="22" viewBox="0 0 110 22"><path d="M3 15.5h14" stroke="#9a9a9a" stroke-width="2.6" fill="none"/><path d="M52.5 5h13.5v13h-13.5z" stroke="#9a9a9a" stroke-width="1.8" fill="none"/><path d="M103.5 4l12.500 12.500M116 4l-12.500 12.500" stroke="#9a9a9a" stroke-width="2.8" fill="none"/></svg><div class="a" style="left:381px;top:201px;width:755px;height:376px;background:#000;box-shadow:-1px -1px 0 #828282;"></div><svg class="a" style="left:1158px;top:167.5px;" width="24" height="23" viewBox="0 0 24 23"><rect x=".5" y=".5" width="22" height="17" fill="#d4e6fa" stroke="#93a9cb"/><rect x="3" y="3.500" width="17" height="13" fill="#fff" stroke="#b4c4dc" stroke-width=".6"/><rect x="18" y="1.200" width="2" height="1.300" fill="#e04030"/><path d="M4.500 9.500v5M6.500 6.500v5M8.500 4.500v5M10.500 4.500v1.500M18.500 4.500v5" stroke="#808890" stroke-width=".9"/><ellipse cx="13" cy="9" rx="4.700" ry="4.200" fill="#3f9a4a"/><path d="M8.500 14c1-3 8-3 9 0z" fill="#2f8038"/><ellipse cx="9" cy="17" rx="4.600" ry="4.800" fill="#d6c02e"/><ellipse cx="17.300" cy="17" rx="4.900" ry="4.900" fill="#2a7ac2"/><circle cx="13" cy="12.800" r="1.100" fill="#f07030"/><circle cx="11.300" cy="16.300" r="1.100" fill="#f07030"/><circle cx="15.200" cy="16.300" r="1.100" fill="#f07030"/><path d="M12.500 18.500l1-2.500 1 2.500z" fill="#fff"/></svg><span id="t42" class="t" style="left:1187px;top:168.5px;font-size:18px;line-height:23.4px;color:#8c8c8c;font-weight:400;transform-origin:0 50%;transform:scaleX(0.8375);">EURJPY,H1</span><svg class="a" style="left:1774px;top:168px;" width="110" height="22" viewBox="0 0 110 22"><path d="M3 15.5h14" stroke="#9a9a9a" stroke-width="2.6" fill="none"/><path d="M52.5 5h13.5v13h-13.5z" stroke="#9a9a9a" stroke-width="1.8" fill="none"/><path d="M103.5 4l12.500 12.500M116 4l-12.500 12.500" stroke="#9a9a9a" stroke-width="2.8" fill="none"/></svg><div class="a" style="left:1154px;top:201px;width:753px;height:376px;background:#000;box-shadow:-1px -1px 0 #828282;"></div><svg class="a" style="left:1774px;top:596px;" width="110" height="22" viewBox="0 0 110 22"><path d="M3 15.5h14" stroke="#9a9a9a" stroke-width="2.6" fill="none"/><path d="M52.5 5h13.5v13h-13.5z" stroke="#9a9a9a" stroke-width="1.8" fill="none"/><path d="M103.5 4l12.500 12.500M116 4l-12.500 12.500" stroke="#9a9a9a" stroke-width="2.8" fill="none"/></svg><div class="a" style="left:381px;top:629px;width:4px;height:158px;background:#fafafa;"></div><div class="a" style="left:385px;top:629px;width:751px;height:158px;background:#000;"></div><div class="a" style="left:1154px;top:629px;width:2px;height:158px;background:#fafafa;"></div><div class="a" style="left:1156px;top:629px;width:751px;height:158px;background:#000;"></div><svg class="a" style="left:0px;top:0px;shape-rendering:crispEdges;" width="1919" height="804" viewBox="0 0 1919 804"><path d="M383.5 577V204.5H1057.5V577" stroke="#fff" fill="none"/><path d="M449.5 205V228M513.5 205V228M577.5 205V228M641.5 205V228M705.5 205V228M769.5 205V228M833.5 205V228M897.5 205V228M961.5 205V228M1025.5 205V228" stroke="#778899" stroke-dasharray="3 3" fill="none"/><path d="M384 220.5H1057" stroke="#778899" fill="none"/><rect x="1060" y="212" width="59" height="16" fill="#778899"/><path d="M1041.5 217v9M1045.5 216v10M1049.5 218v8M1041 223h9" stroke="#00ff00" fill="none"/><path d="M1157.5 549.5V204.5H1829.5V549.5H1733" stroke="#fff" fill="none"/><path d="M1221.5 205V549M1285.5 205V549M1349.5 205V549M1413.5 205V549M1477.5 205V549M1541.5 205V549M1605.5 205V549M1669.5 205V549M1733.5 205V549M1797.5 205V549M1158 214.5H1829M1158 281.5H1829M1158 348.5H1829M1158 415.5H1829M1158 482.5H1829" stroke="#778899" stroke-dasharray="3 3" fill="none"/><path d="M1829 214.5h5M1829 281.5h5M1829 348.5h5M1829 415.5h5M1829 482.5h5" stroke="#fff" fill="none"/><path d="M1221.5 216V226" stroke="#00ff00" fill="none"/><path d="M1733 264.5H1825" stroke="#00c000" stroke-dasharray="7 5" fill="none"/><path d="M1733 274.5H1829" stroke="#778899" fill="none"/><rect x="1832" y="266" width="60" height="16" fill="#778899"/><path d="M1765.5 263V274M1765.5 305V316M1754.5 274.5H1776.5V305.5H1754.5Z" stroke="#00ff00" fill="#000"/><rect x="1733.5" y="295.5" width="11" height="8" fill="#fff" stroke="#00ff00"/><path d="M1733 328l11 12" stroke="#ff00ff" stroke-width="3" fill="none"/><path d="M1733 264l7 6-4 1 -1 4z" fill="#1e6fd0" stroke="#fff" stroke-width=".6"/></svg><span id="t43" class="t" style="left:1064px;top:212.5px;font-size:13.5px;line-height:17.6px;color:#000;font-weight:400;transform-origin:0 50%;transform:scaleX(1.0243);">109.944</span><span id="t44" class="t" style="left:446px;top:211.7px;font-size:13.5px;line-height:17.6px;color:#fff;font-weight:400;transform-origin:0 50%;transform:scaleX(0.9651);">USDJPY,H1</span><span id="t45" class="t" style="left:1219px;top:211.7px;font-size:13.5px;line-height:17.6px;color:#fff;font-weight:400;transform-origin:0 50%;transform:scaleX(0.9375);">EURJPY,H1</span><svg class="a" style="left:390px;top:209px;" width="49" height="18" viewBox="0 0 49 18"><rect x=".5" y="0" width="21" height="18" rx="1.500" fill="#fff" stroke="#c8c8d8" stroke-width=".8"/><path d="M.5 1.500q0-1.500 1.500-1.500h18q1.500 0 1.500 1.500v2.200h-21z" fill="#5a5af0"/><path d="M.5 2.800h21" stroke="#a8a8ff" stroke-width="1"/><path d="M3 6.600h7M3 9.400h7M3 12.400h7M3 15.200h7" stroke="#e04040" stroke-width="1.500"/><path d="M12 6.600h7M12 9.400h7M12 12.400h7M12 15.200h7" stroke="#5050e8" stroke-width="1.500"/><path d="M26 2.700q0-1.500 1.500-1.500h4.400v6.500h4.300v9.300h-10.200z" fill="#2a2ae8"/><path d="M27 15.500h7.500" stroke="#7a7af8" stroke-width="1"/><path d="M48.500 2.700q0-1.500-1.500-1.500h-4.400v6.500h-4.300v9.300h10.200z" fill="#c83030"/><path d="M39.800 15.500h7.500" stroke="#e88080" stroke-width="1"/><rect x="36.300" y="6" width="1.600" height="11" fill="#707070"/><path d="M33 1.400h8.600l.6 5h-9.800z" fill="#c4c4c4"/><path d="M33.200 2h8.200" stroke="#f4f4f4" stroke-width="1"/></svg><svg class="a" style="left:1161.5px;top:209px;" width="49" height="18" viewBox="0 0 49 18"><rect x=".5" y="0" width="21" height="18" rx="1.500" fill="#fff" stroke="#c8c8d8" stroke-width=".8"/><path d="M.5 1.500q0-1.500 1.500-1.500h18q1.500 0 1.500 1.500v2.200h-21z" fill="#5a5af0"/><path d="M.5 2.800h21" stroke="#a8a8ff" stroke-width="1"/><path d="M3 6.600h7M3 9.400h7M3 12.400h7M3 15.200h7" stroke="#e04040" stroke-width="1.500"/><path d="M12 6.600h7M12 9.400h7M12 12.400h7M12 15.200h7" stroke="#5050e8" stroke-width="1.500"/><path d="M26 2.700q0-1.500 1.500-1.500h4.400v6.500h4.300v9.300h-10.200z" fill="#2a2ae8"/><path d="M27 15.500h7.500" stroke="#7a7af8" stroke-width="1"/><path d="M48.500 2.700q0-1.500-1.500-1.500h-4.400v6.500h-4.300v9.300h10.200z" fill="#c83030"/><path d="M39.800 15.500h7.500" stroke="#e88080" stroke-width="1"/><rect x="36.300" y="6" width="1.600" height="11" fill="#707070"/><path d="M33 1.400h8.600l.6 5h-9.800z" fill="#c4c4c4"/><path d="M33.200 2h8.200" stroke="#f4f4f4" stroke-width="1"/></svg><span id="t46" class="t" style="left:1836px;top:206.7px;font-size:13.5px;line-height:17.6px;color:#fff;font-weight:400;transform-origin:0 50%;transform:scaleX(1.0243);">120.980</span><span id="t47" class="t" style="left:1836px;top:273.7px;font-size:13.5px;line-height:17.6px;color:#fff;font-weight:400;transform-origin:0 50%;transform:scaleX(1.0243);">120.910</span><span id="t48" class="t" style="left:1836px;top:340.2px;font-size:13.5px;line-height:17.6px;color:#fff;font-weight:400;transform-origin:0 50%;transform:scaleX(1.0243);">120.840</span><span id="t49" class="t" style="left:1836px;top:407.2px;font-size:13.5px;line-height:17.6px;color:#fff;font-weight:400;transform-origin:0 50%;transform:scaleX(1.0243);">120.770</span><span id="t50" class="t" style="left:1836px;top:474.2px;font-size:13.5px;line-height:17.6px;color:#fff;font-weight:400;transform-origin:0 50%;transform:scaleX(1.0243);">120.700</span><div class="a" style="left:1832px;top:266px;width:60px;height:17px;background:#778899;"></div><span id="t51" class="t" style="left:1836px;top:265.7px;font-size:13.5px;line-height:17.6px;color:#000;font-weight:400;transform-origin:0 50%;transform:scaleX(1.0243);">120.917</span><span id="t52" class="t" style="left:1753px;top:238.2px;font-size:13.5px;line-height:17.6px;color:#fff;font-weight:400;transform-origin:0 50%;transform:scaleX(0.9678);">TradeAI</span><svg class="a" style="left:1805px;top:236px;" width="22" height="22" viewBox="0 0 22 22"><path d="M5 1h15l-2 16H2z" fill="#f4cf58" stroke="#c89a20" stroke-width="1"/><path d="M6 5h10M6 8h10M5 11h10M5 14h10" stroke="#b88a18" stroke-width="1.2"/><path d="M1 17h16v3H2z" fill="#f8e08a" stroke="#c89a20" stroke-width=".8"/></svg><span id="t53" class="t" style="left:1733px;top:553.2px;font-size:13.5px;line-height:17.6px;color:#fff;font-weight:400;transform-origin:0 50%;transform:scaleX(0.7318);">00</span><svg class="a" style="left:0px;top:0px;shape-rendering:crispEdges;" width="1919" height="804" viewBox="0 0 1919 804"><path d="M387.5 629V787M1059.5 629V787" stroke="#fff" fill="none"/><path d="M451.5 664V787M515.5 664V787M579.5 664V787M643.5 664V787M707.5 664V787M771.5 664V787M835.5 664V787M899.5 664V787M963.5 664V787M1027.5 664V787M388 722.5H1059M388 786.5H1059" stroke="#778899" stroke-dasharray="3 3" fill="none"/><path d="M388 699.5H1059" stroke="#778899" fill="none"/><path d="M1059 722.5h5M1059 786.5h5" stroke="#fff" fill="none"/><path d="M967.5 740V787M971.5 727.9V758.8M975.5 729V772.1M979.5 736.8V772.9M983.5 713.8V752M987.5 691.9V741.9M991.5 688.8V750.6M995.5 725.1V750.6M999.5 722.7V737.6M1003.5 720.7V731.1M1007.5 708.2V725.4M1011.5 710.2V723.8M1015.5 711V725.4M1019.5 716V724.3M1023.5 716V728.5M1027.5 706.6V722.3M1031.5 702.9V722M1035.5 711V723.8M1039.5 705V714.9M1043.5 696.1V709.7M1047.5 695V709.4M1051.5 696.9V709.7" stroke="#00ff00" fill="none"/><path d="M985.2 787.0 L990.7 776.0 L1001.7 761.9 L1011.1 742.3 L1018.9 728.5 L1028.3 724.3 L1037.7 718.8 L1044.0 718.0 L1051.0 714.1" stroke="#ff0000" fill="none" style="shape-rendering:auto"/><path d="M399.5 783v4M403.5 761v26M401.5 780h2" stroke="#00ff00" fill="none"/><path d="M412 787 L432 761" stroke="#ff0000" fill="none" style="shape-rendering:auto"/><path d="M575.5 761v13M579.5 761v25M583.5 763v23M587.5 761v26M591.5 761v26M595.5 781v6M603.5 770v16M588 761h4" stroke="#00ff00" fill="none"/><path d="M597 761 L614 787" stroke="#ff0000" fill="none" style="shape-rendering:auto"/><path d="M659.5 783v4M663.5 780v7M667.5 776v10M671.5 771v16M675.5 783v4M679.5 780v7" stroke="#00ff00" fill="none"/><rect x="1062" y="691" width="60" height="17" fill="#778899"/><path d="M1157.5 787V632.5H1829.5V787" stroke="#fff" fill="none"/><path d="M1221.5 633V787M1285.5 633V787M1349.5 633V787M1413.5 633V787M1477.5 633V787M1541.5 633V787M1605.5 633V787M1669.5 633V787M1733.5 633V787M1797.5 633V787M1158 656.5H1829M1158 720.5H1829M1158 785.5H1829" stroke="#778899" stroke-dasharray="3 3" fill="none"/><path d="M1829 656.5h5M1829 720.5h5M1829 785.5h5" stroke="#fff" fill="none"/><path d="M1466.5 769.9V786.9M1470.5 761.1V786.9M1474.5 761.5V770.8M1478.5 689.1V694.0M1482.5 680.2V699.6M1486.5 683.4V700.4M1489.5 664.9V695.6M1493.5 664.9V678.6M1501.5 664.9V687.5M1505.5 664.9V682.6M1509.5 666.5V694.8M1513.5 669.7V694.0M1517.5 680.2V694.0M1521.5 684.3V693.1M1525.5 679.4V691.5M1529.5 679.4V689.9M1533.5 674.2V689.1M1537.5 681.0V724.7M1541.5 698.8V744.9M1545.5 717.4V760.2M1549.5 712.5V743.3M1554.5 731.1V762.7M1558.5 736.0V752.2M1561.5 735.2V751.4M1565.5 745.7V786.9M1569.5 757.0V786.9M1573.5 739.2V776.4M1577.5 737.3V764.3M1581.5 745.7V762.7M1586.5 740.0V753.8M1590.5 744.1V765.9M1594.5 753.0V765.1M1598.5 753.8V769.9M1602.5 747.3V761.1M1605.5 746.5V760.2M1609.5 744.1V759.4M1613.5 754.6V770.8M1618.5 757.0V771.6M1621.5 753.8V765.9M1625.5 746.5V764.3M1629.5 744.9V762.7M1633.5 760.2V786.9M1637.5 758.6V786.9M1641.5 753.8V779.6M1645.5 765.9V783.7M1649.5 763.5V782.1M1653.5 774.8V786.9M1657.5 786.1V786.9" stroke="#00ff00" fill="none"/><g fill="#fff" stroke="#00ff00"><rect x="1485.5" y="685.9" width="2" height="7.3"/><rect x="1500.5" y="664.9" width="2" height="17.8"/><rect x="1508.5" y="667.3" width="2" height="21.8"/><rect x="1516.5" y="684.3" width="2" height="5.7"/><rect x="1532.5" y="681.0" width="2" height="6.5"/><rect x="1536.5" y="687.5" width="2" height="23.4"/><rect x="1540.5" y="710.1" width="2" height="28.3"/><rect x="1548.5" y="717.4" width="2" height="25.1"/><rect x="1553.5" y="742.5" width="2" height="5.7"/><rect x="1560.5" y="739.2" width="2" height="8.1"/><rect x="1564.5" y="747.3" width="2" height="39.6"/><rect x="1576.5" y="750.5" width="2" height="11.3"/><rect x="1589.5" y="746.5" width="2" height="16.2"/><rect x="1604.5" y="749.7" width="2" height="4.9"/><rect x="1608.5" y="754.6" width="2" height="2.4"/><rect x="1612.5" y="756.2" width="2" height="6.5"/><rect x="1617.5" y="761.9" width="2" height="2.4"/><rect x="1628.5" y="760.2" width="2" height="1.9"/><rect x="1632.5" y="760.2" width="2" height="26.7"/><rect x="1640.5" y="763.5" width="2" height="7.3"/><rect x="1644.5" y="770.8" width="2" height="0.8"/><rect x="1648.5" y="774.0" width="2" height="2.4"/><rect x="1652.5" y="776.4" width="2" height="10.5"/></g><g fill="#000" stroke="#00ff00"><rect x="1465.5" y="772.4" width="2" height="14.6"/><rect x="1469.5" y="761.9" width="2" height="10.5"/><rect x="1481.5" y="685.9" width="2" height="4.0"/><rect x="1488.5" y="664.9" width="2" height="29.1"/><rect x="1504.5" y="666.5" width="2" height="13.7"/><rect x="1512.5" y="684.3" width="2" height="4.9"/><rect x="1520.5" y="689.1" width="2" height="2.4"/><rect x="1524.5" y="688.3" width="2" height="2.7"/><rect x="1528.5" y="681.0" width="2" height="7.3"/><rect x="1544.5" y="717.4" width="2" height="21.0"/><rect x="1557.5" y="738.4" width="2" height="9.7"/><rect x="1568.5" y="770.8" width="2" height="16.2"/><rect x="1572.5" y="750.5" width="2" height="20.2"/><rect x="1580.5" y="752.2" width="2" height="9.7"/><rect x="1585.5" y="746.5" width="2" height="7.0"/><rect x="1593.5" y="759.4" width="2" height="4.0"/><rect x="1597.5" y="760.2" width="2" height="8.1"/><rect x="1601.5" y="750.2" width="2" height="10.0"/><rect x="1620.5" y="758.6" width="2" height="4.9"/><rect x="1624.5" y="757.0" width="2" height="5.7"/><rect x="1636.5" y="763.5" width="2" height="23.4"/></g><path d="M1487.7 786.9 L1496.6 750.5 L1504.7 721.4 L1511.1 703.7 L1519.2 687.5 L1525.7 680.2 L1530.5 679.4 L1537.0 680.2 L1545.1 687.5 L1553.2 700.4 L1561.3 710.1 L1569.3 723.1 L1577.4 732.8 L1585.5 742.5 L1593.6 752.2 L1601.7 756.2 L1608.1 757.5 L1617.8 761.1 L1622.7 757.5 L1629.2 757.5 L1634.0 759.4 L1642.1 762.3 L1648.6 763.2 L1653.4 766.7 L1672.0 786.9" stroke="#ff0000" fill="none" style="shape-rendering:auto"/></svg><span id="t54" class="t" style="left:1065px;top:690.7px;font-size:13.5px;line-height:17.6px;color:#000;font-weight:400;transform-origin:0 50%;transform:scaleX(1.0448);">0.97427</span><span id="t55" class="t" style="left:1065px;top:714.7px;font-size:13.5px;line-height:17.6px;color:#fff;font-weight:400;transform-origin:0 50%;transform:scaleX(1.0448);">0.97330</span><span id="t56" class="t" style="left:1065px;top:778.7px;font-size:13.5px;line-height:17.6px;color:#fff;font-weight:400;transform-origin:0 50%;transform:scaleX(1.0448);clip-path:inset(0 0 9px 0);">0.97060</span><span id="t57" class="t" style="left:1836px;top:648.7px;font-size:13.5px;line-height:17.6px;color:#fff;font-weight:400;transform-origin:0 50%;transform:scaleX(1.0243);">1.10915</span><span id="t58" class="t" style="left:1836px;top:712.7px;font-size:13.5px;line-height:17.6px;color:#fff;font-weight:400;transform-origin:0 50%;transform:scaleX(1.0243);">1.10710</span><span id="t59" class="t" style="left:1836px;top:777.7px;font-size:13.5px;line-height:17.6px;color:#fff;font-weight:400;transform-origin:0 50%;transform:scaleX(1.0243);clip-path:inset(0 0 8px 0);">1.10505</span><div class="a" style="left:388px;top:664px;width:322px;height:96px;background:#000;"></div><div class="a" style="left:391px;top:694px;width:157px;height:65px;background:linear-gradient(#3636e2,#0000a6);box-shadow:inset 1px 0 0 #0000b4,inset -1px 0 0 #0000b4;"></div><div class="a" style="left:550px;top:694px;width:156px;height:65px;background:linear-gradient(#3636e2,#0000a6);box-shadow:inset 1px 0 0 #0000b4,inset -1px 0 0 #0000b4;"></div><div class="a" style="left:391px;top:664px;width:76px;height:30px;background:linear-gradient(#5252fa,#3c3ce6);box-shadow:inset 1px 0 0 #0000b4,inset -1px 0 0 #0000b4,inset 0 1px 0 #0000b4;"></div><div class="a" style="left:630px;top:664px;width:76px;height:30px;background:linear-gradient(#5252fa,#3c3ce6);box-shadow:inset 1px 0 0 #0000b4,inset -1px 0 0 #0000b4,inset 0 1px 0 #0000b4;"></div><div class="a" style="left:395px;top:693px;width:68px;height:1px;background:rgba(0,0,40,.55);"></div><div class="a" style="left:634px;top:693px;width:68px;height:1px;background:rgba(0,0,40,.55);"></div><div class="a" style="left:395px;top:694px;width:68px;height:1px;background:rgba(255,255,255,.35);"></div><div class="a" style="left:634px;top:694px;width:68px;height:1px;background:rgba(255,255,255,.35);"></div><div class="a" style="left:467px;top:664px;width:163px;height:30px;background:#000;"></div><div class="a" style="left:548px;top:694px;width:2px;height:65px;background:#000;"></div><div class="a" style="left:469px;top:664px;width:159px;height:28px;background:#fff;box-sizing:border-box;border:1px solid #adadad;"></div><div class="a" style="left:469px;top:664px;width:29px;height:28px;background:linear-gradient(#f2f2f2,#dcdcdc);box-sizing:border-box;border:1px solid #adadad;"></div><div class="a" style="left:599px;top:664px;width:29px;height:28px;background:linear-gradient(#f2f2f2,#dcdcdc);box-sizing:border-box;border:1px solid #adadad;"></div><svg class="a" style="left:479px;top:675px;" width="9" height="5" viewBox="0 0 9 5"><path d="M0 0h9l-4.5 5z" fill="#000"/></svg><svg class="a" style="left:609px;top:674px;" width="9" height="5" viewBox="0 0 9 5"><path d="M0 5h9l-4.5 -5z" fill="#000"/></svg><span id="t60" class="t" style="right:1324px;top:666.95px;font-size:17px;line-height:22.1px;color:#000;font-weight:400;transform-origin:100% 50%;transform:scaleX(0.9972);">0.01</span><span id="t61" class="t" style="left:410.5px;top:668.6px;font-size:17.5px;line-height:22.8px;color:#fff;font-weight:400;transform-origin:0 50%;transform:scaleX(0.8526);">SELL</span><span id="t62" class="t" style="left:650.5px;top:668.6px;font-size:17.5px;line-height:22.8px;color:#fff;font-weight:400;transform-origin:0 50%;transform:scaleX(0.9032);">BUY</span><span id="t63" class="t" style="left:421px;top:726.6px;font-size:17.5px;line-height:22.8px;color:#fff;font-weight:400;transform-origin:0 50%;transform:scaleX(0.9688);-webkit-text-stroke:.3px #fff;">0.97</span><span id="t64" class="t" style="left:457px;top:697.45px;font-size:47px;line-height:61.1px;color:#fff;font-weight:400;transform-origin:0 50%;transform:scaleX(1.0042);">42</span><span id="t65" class="t" style="left:516px;top:707.45px;font-size:17px;line-height:22.1px;color:#fff;font-weight:400;transform-origin:0 50%;transform:scaleX(0.8977);-webkit-text-stroke:.3px #fff;">7</span><span id="t66" class="t" style="left:579px;top:726.6px;font-size:17.5px;line-height:22.8px;color:#fff;font-weight:400;transform-origin:0 50%;transform:scaleX(0.9688);-webkit-text-stroke:.3px #fff;">0.97</span><span id="t67" class="t" style="left:615px;top:697.45px;font-size:47px;line-height:61.1px;color:#fff;font-weight:400;transform-origin:0 50%;transform:scaleX(1.0042);">44</span><span id="t68" class="t" style="left:674px;top:707.45px;font-size:17px;line-height:22.1px;color:#fff;font-weight:400;transform-origin:0 50%;transform:scaleX(0.8977);-webkit-text-stroke:.3px #fff;">5</span><div class="a" style="left:1158px;top:664px;width:322px;height:96px;background:#000;"></div><div class="a" style="left:1161px;top:694px;width:157px;height:65px;background:linear-gradient(#e23636,#a60000);box-shadow:inset 1px 0 0 #b40000,inset -1px 0 0 #b40000;"></div><div class="a" style="left:1320px;top:694px;width:156px;height:65px;background:linear-gradient(#3636e2,#0000a6);box-shadow:inset 1px 0 0 #0000b4,inset -1px 0 0 #0000b4;"></div><div class="a" style="left:1161px;top:664px;width:76px;height:30px;background:linear-gradient(#fa5252,#e63c3c);box-shadow:inset 1px 0 0 #b40000,inset -1px 0 0 #b40000,inset 0 1px 0 #b40000;"></div><div class="a" style="left:1400px;top:664px;width:76px;height:30px;background:linear-gradient(#5252fa,#3c3ce6);box-shadow:inset 1px 0 0 #0000b4,inset -1px 0 0 #0000b4,inset 0 1px 0 #0000b4;"></div><div class="a" style="left:1165px;top:693px;width:68px;height:1px;background:rgba(0,0,40,.55);"></div><div class="a" style="left:1404px;top:693px;width:68px;height:1px;background:rgba(0,0,40,.55);"></div><div class="a" style="left:1165px;top:694px;width:68px;height:1px;background:rgba(255,255,255,.35);"></div><div class="a" style="left:1404px;top:694px;width:68px;height:1px;background:rgba(255,255,255,.35);"></div><div class="a" style="left:1237px;top:664px;width:163px;height:30px;background:#000;"></div><div class="a" style="left:1318px;top:694px;width:2px;height:65px;background:#000;"></div><div class="a" style="left:1239px;top:664px;width:159px;height:28px;background:#fff;box-sizing:border-box;border:1px solid #adadad;"></div><div class="a" style="left:1239px;top:664px;width:29px;height:28px;background:linear-gradient(#f2f2f2,#dcdcdc);box-sizing:border-box;border:1px solid #adadad;"></div><div class="a" style="left:1369px;top:664px;width:29px;height:28px;background:linear-gradient(#f2f2f2,#dcdcdc);box-sizing:border-box;border:1px solid #adadad;"></div><svg class="a" style="left:1249px;top:675px;" width="9" height="5" viewBox="0 0 9 5"><path d="M0 0h9l-4.5 5z" fill="#000"/></svg><svg class="a" style="left:1379px;top:674px;" width="9" height="5" viewBox="0 0 9 5"><path d="M0 5h9l-4.5 -5z" fill="#000"/></svg><span id="t69" class="t" style="right:554px;top:666.95px;font-size:17px;line-height:22.1px;color:#000;font-weight:400;transform-origin:100% 50%;transform:scaleX(0.9972);">0.01</span><span id="t70" class="t" style="left:1180.5px;top:668.6px;font-size:17.5px;line-height:22.8px;color:#fff;font-weight:400;transform-origin:0 50%;transform:scaleX(0.8526);">SELL</span><span id="t71" class="t" style="left:1420.5px;top:668.6px;font-size:17.5px;line-height:22.8px;color:#fff;font-weight:400;transform-origin:0 50%;transform:scaleX(0.9032);">BUY</span><span id="t72" class="t" style="left:1191px;top:726.6px;font-size:17.5px;line-height:22.8px;color:#fff;font-weight:400;transform-origin:0 50%;transform:scaleX(0.9688);-webkit-text-stroke:.3px #fff;">1.09</span><span id="t73" class="t" style="left:1227px;top:697.45px;font-size:47px;line-height:61.1px;color:#fff;font-weight:400;transform-origin:0 50%;transform:scaleX(1.0042);">97</span><span id="t74" class="t" style="left:1286px;top:707.45px;font-size:17px;line-height:22.1px;color:#fff;font-weight:400;transform-origin:0 50%;transform:scaleX(0.8977);-webkit-text-stroke:.3px #fff;">4</span><span id="t75" class="t" style="left:1349px;top:726.6px;font-size:17.5px;line-height:22.8px;color:#fff;font-weight:400;transform-origin:0 50%;transform:scaleX(0.9688);-webkit-text-stroke:.3px #fff;">1.09</span><span id="t76" class="t" style="left:1385px;top:697.45px;font-size:47px;line-height:61.1px;color:#fff;font-weight:400;transform-origin:0 50%;transform:scaleX(1.0042);">99</span><span id="t77" class="t" style="left:1444px;top:707.45px;font-size:17px;line-height:22.1px;color:#fff;font-weight:400;transform-origin:0 50%;transform:scaleX(0.8977);-webkit-text-stroke:.3px #fff;">2</span><div class="a" style="left:379.5px;top:226px;width:1354.5px;height:438px;background:#fff;box-shadow:0 1px 0 #b0b0b0;"></div><div class="a" style="left:389px;top:269px;width:1336px;height:387px;background:#000;border-top:2px solid #696969;border-left:2px solid #696969;box-sizing:border-box;"></div><svg class="a" style="left:393px;top:235.5px;" width="24" height="23" viewBox="0 0 24 23"><rect x=".5" y=".5" width="22" height="17" fill="#d4e6fa" stroke="#93a9cb"/><rect x="3" y="3.500" width="17" height="13" fill="#fff" stroke="#b4c4dc" stroke-width=".6"/><rect x="18" y="1.200" width="2" height="1.300" fill="#e04030"/><path d="M4.500 9.500v5M6.500 6.500v5M8.500 4.500v5M10.500 4.500v1.500M18.500 4.500v5" stroke="#808890" stroke-width=".9"/><ellipse cx="13" cy="9" rx="4.700" ry="4.200" fill="#3f9a4a"/><path d="M8.500 14c1-3 8-3 9 0z" fill="#2f8038"/><ellipse cx="9" cy="17" rx="4.600" ry="4.800" fill="#d6c02e"/><ellipse cx="17.300" cy="17" rx="4.900" ry="4.900" fill="#2a7ac2"/><circle cx="13" cy="12.800" r="1.100" fill="#f07030"/><circle cx="11.300" cy="16.300" r="1.100" fill="#f07030"/><circle cx="15.200" cy="16.300" r="1.100" fill="#f07030"/><path d="M12.500 18.500l1-2.500 1 2.500z" fill="#fff"/></svg><span id="t78" class="t" style="left:422px;top:236.5px;font-size:18px;line-height:23.4px;color:#000;font-weight:400;transform-origin:0 50%;transform:scaleX(0.8995);">USDJPY,H1</span><svg class="a" style="left:1591px;top:236px;" width="110" height="22" viewBox="0 0 110 22"><path d="M3 15.5h14" stroke="#000" stroke-width="3.2" fill="none"/><path d="M52.5 5h13.5v13h-13.5z" stroke="#000" stroke-width="2.4" fill="none"/><path d="M103.5 4l12.500 12.500M116 4l-12.500 12.500" stroke="#000" stroke-width="3.4" fill="none"/></svg><svg class="a" style="left:0px;top:0px;shape-rendering:crispEdges;" width="1919" height="804" viewBox="0 0 1919 804"><path d="M391.5 628.5V272.5H1646.5V628.5Z" stroke="#fff" fill="none"/><path d="M455.5 273V628M519.5 273V628M583.5 273V628M647.5 273V628M711.5 273V628M775.5 273V628M839.5 273V628M903.5 273V628M967.5 273V628M1031.5 273V628M1095.5 273V628M1159.5 273V628M1223.5 273V628M1287.5 273V628M1351.5 273V628M1415.5 273V628M1479.5 273V628M1543.5 273V628M1607.5 273V628M392 304.5H1646M392 369.5H1646M392 434.5H1646M392 499.5H1646M392 563.5H1646" stroke="#778899" stroke-dasharray="3 3" fill="none"/><path d="M1646 304.5h5M1646 369.5h5M1646 434.5h5M1646 499.5h5M1646 563.5h5M391.5 628v6M519.5 628v6M647.5 628v6M775.5 628v6M903.5 628v6M1031.5 628v6M1159.5 628v6M1287.5 628v6M1415.5 628v6M1543.5 628v6" stroke="#fff" fill="none"/><path d="M392 291.5H1646" stroke="#778899" fill="none"/><rect x="1648" y="284" width="61" height="16" fill="#778899"/><path d="M392 589h5v2h-5zM406 587h2v22h-2zM401 589h5v2h-5zM408 607h5v2h-5zM422 592h2v18h-2zM417 607h5v2h-5zM424 593h5v2h-5zM438 592h2v17h-2zM433 593h5v2h-5zM440 608h5v2h-5zM454 596h2v14h-2zM449 608h5v2h-5zM456 596h5v2h-5zM470 597h2v12h-2zM465 596h5v2h-5zM472 598h5v2h-5zM486 560h2v45h-2zM481 598h5v2h-5zM488 575h5v2h-5zM502 570h2v43h-2zM497 575h5v2h-5zM504 579h5v2h-5zM518 579h2v24h-2zM513 579h5v2h-5zM520 601h5v2h-5zM534 596h2v26h-2zM529 601h5v2h-5zM536 620h5v2h-5zM550 594h2v28h-2zM545 620h5v2h-5zM552 597h5v2h-5zM566 596h2v12h-2zM561 597h5v2h-5zM568 600h5v2h-5zM582 586h2v17h-2zM577 600h5v2h-5zM584 594h5v2h-5zM598 566h2v42h-2zM593 593h5v2h-5zM600 575h5v2h-5zM614 538h2v46h-2zM609 550h5v2h-5zM616 557h5v2h-5zM630 553h2v47h-2zM625 557h5v2h-5zM632 583h5v2h-5zM646 564h2v28h-2zM641 583h5v2h-5zM648 567h5v2h-5zM662 566h2v20h-2zM657 567h5v2h-5zM664 566h5v2h-5zM678 561h2v16h-2zM673 565h5v2h-5zM680 565h5v2h-5zM694 550h2v20h-2zM689 564h5v2h-5zM696 562h5v2h-5zM710 560h2v11h-2zM705 562h5v2h-5zM712 569h5v2h-5zM726 558h2v15h-2zM721 567h5v2h-5zM728 567h5v2h-5zM742 566h2v21h-2zM737 567h5v2h-5zM744 577h5v2h-5zM758 569h2v20h-2zM753 577h5v2h-5zM760 583h5v2h-5zM774 556h2v36h-2zM769 583h5v2h-5zM776 559h5v2h-5zM790 560h2v20h-2zM785 560h5v2h-5zM792 567h5v2h-5zM806 542h2v36h-2zM801 567h5v2h-5zM808 561h5v2h-5zM822 542h2v21h-2zM817 561h5v2h-5zM824 552h5v2h-5zM838 526h2v31h-2zM833 552h5v2h-5zM840 535h5v2h-5zM854 509h2v33h-2zM849 535h5v2h-5zM856 514h5v2h-5zM870 506h2v28h-2zM865 514h5v2h-5zM872 508h5v2h-5zM886 477h2v38h-2zM881 509h5v2h-5zM888 488h5v2h-5zM902 467h2v29h-2zM897 487h5v2h-5zM904 477h5v2h-5zM918 475h2v25h-2zM913 476h5v2h-5zM920 498h5v2h-5zM934 481h2v21h-2zM929 498h5v2h-5zM936 488h5v2h-5zM950 465h2v26h-2zM945 488h5v2h-5zM952 466h5v2h-5zM966 452h2v30h-2zM961 466h5v2h-5zM968 455h5v2h-5zM982 436h2v33h-2zM977 455h5v2h-5zM984 441h5v2h-5zM998 417h2v36h-2zM993 441h5v2h-5zM1000 422h5v2h-5zM1014 399h2v35h-2zM1009 422h5v2h-5zM1016 407h5v2h-5zM1030 394h2v18h-2zM1025 407h5v2h-5zM1032 395h5v2h-5zM1046 382h2v22h-2zM1041 395h5v2h-5zM1048 392h5v2h-5zM1062 379h2v17h-2zM1057 391h5v2h-5zM1064 387h5v2h-5zM1078 377h2v20h-2zM1073 387h5v2h-5zM1080 393h5v2h-5zM1094 378h2v22h-2zM1089 393h5v2h-5zM1096 383h5v2h-5zM1110 382h2v20h-2zM1105 383h5v2h-5zM1112 395h5v2h-5zM1126 388h2v16h-2zM1121 396h5v2h-5zM1128 399h5v2h-5zM1142 391h2v25h-2zM1137 399h5v2h-5zM1144 405h5v2h-5zM1158 390h2v28h-2zM1153 405h5v2h-5zM1160 390h5v2h-5zM1174 389h2v11h-2zM1169 390h5v2h-5zM1176 396h5v2h-5zM1190 393h2v16h-2zM1185 396h5v2h-5zM1192 399h5v2h-5zM1206 391h2v12h-2zM1201 399h5v2h-5zM1208 393h5v2h-5zM1222 392h2v17h-2zM1217 393h5v2h-5zM1224 402h5v2h-5zM1238 395h2v16h-2zM1233 402h5v2h-5zM1240 406h5v2h-5zM1254 404h2v24h-2zM1249 406h5v2h-5zM1256 422h5v2h-5zM1270 340h2v91h-2zM1265 423h5v2h-5zM1272 375h5v2h-5zM1286 343h2v39h-2zM1281 375h5v2h-5zM1288 345h5v2h-5zM1302 343h2v20h-2zM1297 345h5v2h-5zM1304 350h5v2h-5zM1318 339h2v40h-2zM1313 350h5v2h-5zM1320 370h5v2h-5zM1334 344h2v33h-2zM1329 371h5v2h-5zM1336 346h5v2h-5zM1350 320h2v31h-2zM1345 346h5v2h-5zM1352 328h5v2h-5zM1366 315h2v24h-2zM1361 328h5v2h-5zM1368 319h5v2h-5zM1382 313h2v44h-2zM1377 319h5v2h-5zM1384 332h5v2h-5zM1398 332h2v21h-2zM1393 332h5v2h-5zM1400 334h5v2h-5zM1414 331h2v9h-2zM1409 334h5v2h-5zM1416 330h5v2h-5zM1430 328h2v10h-2zM1425 330h5v2h-5zM1432 330h5v2h-5zM1446 315h2v19h-2zM1441 330h5v2h-5zM1448 315h5v2h-5zM1462 315h2v9h-2zM1457 315h5v2h-5zM1464 316h5v2h-5zM1478 313h2v11h-2zM1473 316h5v2h-5zM1480 322h5v2h-5zM1494 317h2v18h-2zM1489 319h5v2h-5zM1496 323h5v2h-5zM1510 318h2v11h-2zM1505 323h5v2h-5zM1512 318h5v2h-5zM1526 299h2v25h-2zM1521 318h5v2h-5zM1528 313h5v2h-5zM1542 301h2v21h-2zM1537 313h5v2h-5zM1544 315h5v2h-5zM1558 303h2v13h-2zM1553 315h5v2h-5zM1560 304h5v2h-5zM1574 300h2v13h-2zM1569 304h5v2h-5zM1576 302h5v2h-5zM1590 287h2v19h-2zM1585 302h5v2h-5zM1592 288h5v2h-5zM1606 283h2v18h-2zM1601 288h5v2h-5zM1608 299h5v2h-5zM1622 288h2v14h-2zM1617 299h5v2h-5zM1624 290h5v2h-5z" fill="#00ff00"/></svg><svg class="a" style="left:395.5px;top:277.3px;" width="49" height="18" viewBox="0 0 49 18"><rect x=".5" y="0" width="21" height="18" rx="1.500" fill="#fff" stroke="#c8c8d8" stroke-width=".8"/><path d="M.5 1.500q0-1.500 1.500-1.500h18q1.500 0 1.500 1.500v2.200h-21z" fill="#5a5af0"/><path d="M.5 2.800h21" stroke="#a8a8ff" stroke-width="1"/><path d="M3 6.600h7M3 9.400h7M3 12.400h7M3 15.200h7" stroke="#e04040" stroke-width="1.500"/><path d="M12 6.600h7M12 9.400h7M12 12.400h7M12 15.200h7" stroke="#5050e8" stroke-width="1.500"/><path d="M26 2.700q0-1.500 1.500-1.500h4.400v6.500h4.300v9.300h-10.200z" fill="#2a2ae8"/><path d="M27 15.500h7.500" stroke="#7a7af8" stroke-width="1"/><path d="M48.500 2.700q0-1.500-1.500-1.500h-4.400v6.500h-4.300v9.300h10.200z" fill="#c83030"/><path d="M39.800 15.500h7.500" stroke="#e88080" stroke-width="1"/><rect x="36.300" y="6" width="1.600" height="11" fill="#707070"/><path d="M33 1.400h8.600l.6 5h-9.800z" fill="#c4c4c4"/><path d="M33.200 2h8.200" stroke="#f4f4f4" stroke-width="1"/></svg><span id="t79" class="t" style="left:452.5px;top:279.7px;font-size:13.5px;line-height:17.6px;color:#fff;font-weight:400;transform-origin:0 50%;transform:scaleX(0.9513);">USDJPY,H1</span><span id="t80" class="t" style="left:1652px;top:283.2px;font-size:13.5px;line-height:17.6px;color:#000;font-weight:400;transform-origin:0 50%;transform:scaleX(1.0243);">109.944</span><span id="t81" class="t" style="left:1652px;top:296.7px;font-size:13.5px;line-height:17.6px;color:#fff;font-weight:400;transform-origin:0 50%;transform:scaleX(1.0243);">109.880</span><span id="t82" class="t" style="left:1652px;top:361.7px;font-size:13.5px;line-height:17.6px;color:#fff;font-weight:400;transform-origin:0 50%;transform:scaleX(1.0243);">109.580</span><span id="t83" class="t" style="left:1652px;top:426.7px;font-size:13.5px;line-height:17.6px;color:#fff;font-weight:400;transform-origin:0 50%;transform:scaleX(1.0243);">109.280</span><span id="t84" class="t" style="left:1652px;top:491.7px;font-size:13.5px;line-height:17.6px;color:#fff;font-weight:400;transform-origin:0 50%;transform:scaleX(1.0243);">108.980</span><span id="t85" class="t" style="left:1652px;top:555.7px;font-size:13.5px;line-height:17.6px;color:#fff;font-weight:400;transform-origin:0 50%;transform:scaleX(1.0243);">108.680</span><span id="t86" class="t" style="left:391px;top:632.7px;font-size:13.5px;line-height:17.6px;color:#fff;font-weight:400;transform-origin:0 50%;transform:scaleX(0.9954);">3 Feb 2020</span><span id="t87" class="t" style="left:519px;top:632.7px;font-size:13.5px;line-height:17.6px;color:#fff;font-weight:400;transform-origin:0 50%;transform:scaleX(1.0554);">3 Feb 11:00</span><span id="t88" class="t" style="left:647px;top:632.7px;font-size:13.5px;line-height:17.6px;color:#fff;font-weight:400;transform-origin:0 50%;transform:scaleX(1.0408);">3 Feb 19:00</span><span id="t89" class="t" style="left:775px;top:632.7px;font-size:13.5px;line-height:17.6px;color:#fff;font-weight:400;transform-origin:0 50%;transform:scaleX(1.0408);">4 Feb 03:00</span><span id="t90" class="t" style="left:903px;top:632.7px;font-size:13.5px;line-height:17.6px;color:#fff;font-weight:400;transform-origin:0 50%;transform:scaleX(1.0554);">4 Feb 11:00</span><span id="t91" class="t" style="left:1031px;top:632.7px;font-size:13.5px;line-height:17.6px;color:#fff;font-weight:400;transform-origin:0 50%;transform:scaleX(1.0408);">4 Feb 19:00</span><span id="t92" class="t" style="left:1159px;top:632.7px;font-size:13.5px;line-height:17.6px;color:#fff;font-weight:400;transform-origin:0 50%;transform:scaleX(1.0408);">5 Feb 03:00</span><span id="t93" class="t" style="left:1287px;top:632.7px;font-size:13.5px;line-height:17.6px;color:#fff;font-weight:400;transform-origin:0 50%;transform:scaleX(1.0554);">5 Feb 11:00</span><span id="t94" class="t" style="left:1415px;top:632.7px;font-size:13.5px;line-height:17.6px;color:#fff;font-weight:400;transform-origin:0 50%;transform:scaleX(1.0408);">5 Feb 19:00</span><span id="t95" class="t" style="left:1543px;top:632.7px;font-size:13.5px;line-height:17.6px;color:#fff;font-weight:400;transform-origin:0 50%;transform:scaleX(1.0408);">6 Feb 03:00</span><div class="a" style="left:372px;top:787px;width:1547px;height:1px;background:#696969;"></div><div class="a" style="left:372px;top:788px;width:1547px;height:16px;background:#f0f0f0;"></div><div class="a" style="left:374px;top:788px;width:734px;height:1px;background:#fff;"></div><div class="a" style="left:1108px;top:789px;width:811px;height:1px;background:#fff;"></div><div class="a" style="left:504px;top:793px;width:1px;height:11px;background:#8c8c8c;"></div><div class="a" style="left:624px;top:793px;width:1px;height:11px;background:#8c8c8c;"></div><div class="a" style="left:741px;top:793px;width:1px;height:11px;background:#8c8c8c;"></div><div class="a" style="left:870px;top:793px;width:1px;height:11px;background:#8c8c8c;"></div><div class="a" style="left:989px;top:787px;width:119px;height:17px;background:#fff;border-left:1px solid #404040;border-right:1px solid #404040;box-sizing:border-box;"></div><span id="t96" class="t" style="left:393px;top:793.8px;font-size:18px;line-height:23.4px;color:#8c8c8c;font-weight:400;transform-origin:0 50%;transform:scaleX(0.8613);">USDCHF,H1</span><span id="t97" class="t" style="left:521px;top:793.8px;font-size:18px;line-height:23.4px;color:#8c8c8c;font-weight:400;transform-origin:0 50%;transform:scaleX(0.8995);">USDJPY,H1</span><span id="t98" class="t" style="left:641px;top:793.8px;font-size:18px;line-height:23.4px;color:#8c8c8c;font-weight:400;transform-origin:0 50%;transform:scaleX(0.8685);">EURJPY,H1</span><span id="t99" class="t" style="left:758px;top:793.8px;font-size:18px;line-height:23.4px;color:#8c8c8c;font-weight:400;transform-origin:0 50%;transform:scaleX(0.8074);">EURUSD,H1</span><span id="t100" class="t" style="left:887px;top:793.8px;font-size:18px;line-height:23.4px;color:#8c8c8c;font-weight:400;transform-origin:0 50%;transform:scaleX(0.8685);">EURJPY,H1</span><span id="t101" class="t" style="left:1005px;top:793.8px;font-size:18px;line-height:23.4px;color:#000;font-weight:400;transform-origin:0 50%;transform:scaleX(0.8995);">USDJPY,H1</span><svg class="a" style="left:1860px;top:797px;" width="50" height="8" viewBox="0 0 50 8"><path d="M8 0v8l-7-4zM36 0v8l7-4z" fill="#b0b0b0"/></svg>
<div class="a" style="left:7px;top:109.5px;width:177px;height:216.5px;background:#f1f1f1;border:1px solid #b4b4b4;box-sizing:border-box;box-shadow:3px 3px 3px rgba(0,0,0,.5);"></div><div class="a" style="left:10px;top:211px;width:171px;height:33px;background:#0078d7;"></div><span id="t102" class="t" style="left:52px;top:118.9px;font-size:18px;line-height:23.4px;color:#000;font-weight:400;transform-origin:0 50%;transform:scaleX(0.8682);">EURUSD</span><span id="t103" class="t" style="left:52px;top:151.9px;font-size:18px;line-height:23.4px;color:#000;font-weight:400;transform-origin:0 50%;transform:scaleX(0.8681);">GBPUSD</span><span id="t104" class="t" style="left:52px;top:184.9px;font-size:18px;line-height:23.4px;color:#000;font-weight:400;transform-origin:0 50%;transform:scaleX(0.8800);">USDCHF</span><span id="t105" class="t" style="left:52px;top:217.9px;font-size:18px;line-height:23.4px;color:#fff;font-weight:400;transform-origin:0 50%;transform:scaleX(0.8449);">USDJPY</span><span id="t106" class="t" style="left:52px;top:250.9px;font-size:18px;line-height:23.4px;color:#000;font-weight:400;transform-origin:0 50%;transform:scaleX(0.8026);">EURJPY</span><span id="t107" class="t" style="left:52px;top:298.4px;font-size:18px;line-height:23.4px;color:#000;font-weight:400;transform-origin:0 50%;transform:scaleX(0.9127);">Forex</span><div class="a" style="left:11px;top:284px;width:169px;height:1px;background:#a0a0a0;"></div><svg class="a" style="left:165px;top:299px;" width="6" height="11" viewBox="0 0 6 11"><path d="M0 0l6 5.5-6 5.5z" fill="#000"/></svg><svg class="a" style="left:0px;top:0px;" width="1919" height="804" viewBox="0 0 1919 804"><ellipse cx="33" cy="90.4" rx="29.1" ry="29.2" stroke="#ed1c24" stroke-width="5.6" fill="none"/><ellipse cx="95.6" cy="72.8" rx="31.4" ry="29" stroke="#ed1c24" stroke-width="5.6" fill="#fff"/><ellipse cx="77" cy="229.1" rx="60.8" ry="32" stroke="#ed1c24" stroke-width="5.6" fill="none"/><ellipse cx="174.75" cy="209.2" rx="32.6" ry="31.4" stroke="#ed1c24" stroke-width="5.6" fill="#fff"/><path d="M244 339.2H318.6V317.3L396.8 363.1L318.6 408.9V386.4H244Z" fill="#ed1c24"/><ellipse cx="378.5" cy="305.8" rx="36.7" ry="35.4" stroke="#ed1c24" stroke-width="5.6" fill="#fff"/></svg><span id="t108" class="t" style="left:93.2px;top:60.3px;font-size:20px;line-height:26px;color:#ed1c24;font-weight:700;transform-origin:50% 50%;transform:translateX(-50%) scaleX(1.0000);">1</span><span id="t109" class="t" style="left:175.7px;top:199.3px;font-size:20px;line-height:26px;color:#ed1c24;font-weight:700;transform-origin:50% 50%;transform:translateX(-50%) scaleX(1.0000);">2</span><span id="t110" class="t" style="left:375.8px;top:293.3px;font-size:20px;line-height:26px;color:#ed1c24;font-weight:700;transform-origin:50% 50%;transform:translateX(-50%) scaleX(1.0000);">3</span>
</body></html>
